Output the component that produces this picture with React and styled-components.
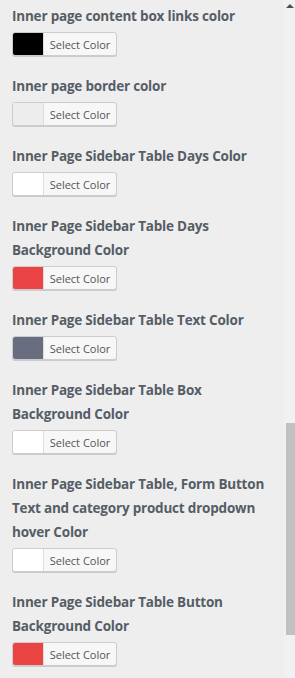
import React from "react";
import styled, { createGlobalStyle } from "styled-components";

const Global = createGlobalStyle`
  html, body { margin: 0; padding: 0; background: #eeeeee; }
  body { width: 295px; height: 678px; overflow: hidden; }
`;

const Frame = styled.div`
  display: flex;
  width: 295px;
  height: 678px;
  background: #eeeeee;
`;

const Panel = styled.div`
  flex: 1;
  padding: 4px 0 0 12px;
  box-sizing: border-box;
  display: flex;
  flex-direction: column;
  gap: 18px;
`;

const Field = styled.div`
  display: flex;
  flex-direction: column;
  gap: 4px;
  align-items: flex-start;
`;

const Label = styled.div`
  width: 262px;
  font-family: "Open Sans", "Noto Sans", sans-serif;
  font-weight: 700;
  font-size: 13.5px;
  line-height: 24px;
  color: #555d66;
  letter-spacing: -0.2px;
`;

const ColorButton = styled.button`
  display: flex;
  align-items: stretch;
  height: 24px;
  width: 105px;
  padding: 0;
  border: 1px solid #cccccc;
  border-radius: 3px;
  background: #f7f7f7;
  box-shadow: 0 1px 0 #cccccc;
  overflow: hidden;
  box-sizing: border-box;
  cursor: pointer;
`;

const Swatch = styled.span`
  width: 30px;
  background: ${(p) => p.$color};
  border-right: 1px solid #dddddd;
`;

const ButtonText = styled.span`
  flex: 1;
  display: flex;
  align-items: center;
  justify-content: center;
  font-family: "Open Sans", "Noto Sans", sans-serif;
  font-size: 11px;
  color: #555555;
`;

const Scrollbar = styled.div`
  width: 11px;
  background: #f1f1f1;
  position: relative;
  display: flex;
  flex-direction: column;
  align-items: center;
`;

const Arrow = styled.div`
  margin-top: 4px;
  width: 0;
  height: 0;
  border-left: 4px solid transparent;
  border-right: 4px solid transparent;
  border-bottom: 4px solid #505050;
`;

const Thumb = styled.div`
  margin-top: 415px;
  align-self: flex-end;
  width: 9px;
  height: 212px;
  background: #c1c1c1;
`;

const fields = [
  { label: "Inner page content box links color", color: "#000000" },
  { label: "Inner page border color", color: "#ededed" },
  { label: "Inner Page Sidebar Table Days Color", color: "#ffffff" },
  { label: "Inner Page Sidebar Table Days Background Color", color: "#ea4444" },
  { label: "Inner Page Sidebar Table Text Color", color: "#686e80" },
  { label: "Inner Page Sidebar Table Box Background Color", color: "#ffffff" },
  {
    label: "Inner Page Sidebar Table, Form Button Text and category product dropdown hover Color",
    color: "#ffffff",
  },
  { label: "Inner Page Sidebar Table Button Background Color", color: "#ea4444" },
];

export default function App() {
  return (
    <>
      <Global />
      <Frame>
        <Panel>
          {fields.map((f) => (
            <Field key={f.label}>
              <Label>{f.label}</Label>
              <ColorButton type="button">
                <Swatch $color={f.color} />
                <ButtonText>Select Color</ButtonText>
              </ColorButton>
            </Field>
          ))}
        </Panel>
        <Scrollbar>
          <Arrow />
          <Thumb />
        </Scrollbar>
      </Frame>
    </>
  );
}
